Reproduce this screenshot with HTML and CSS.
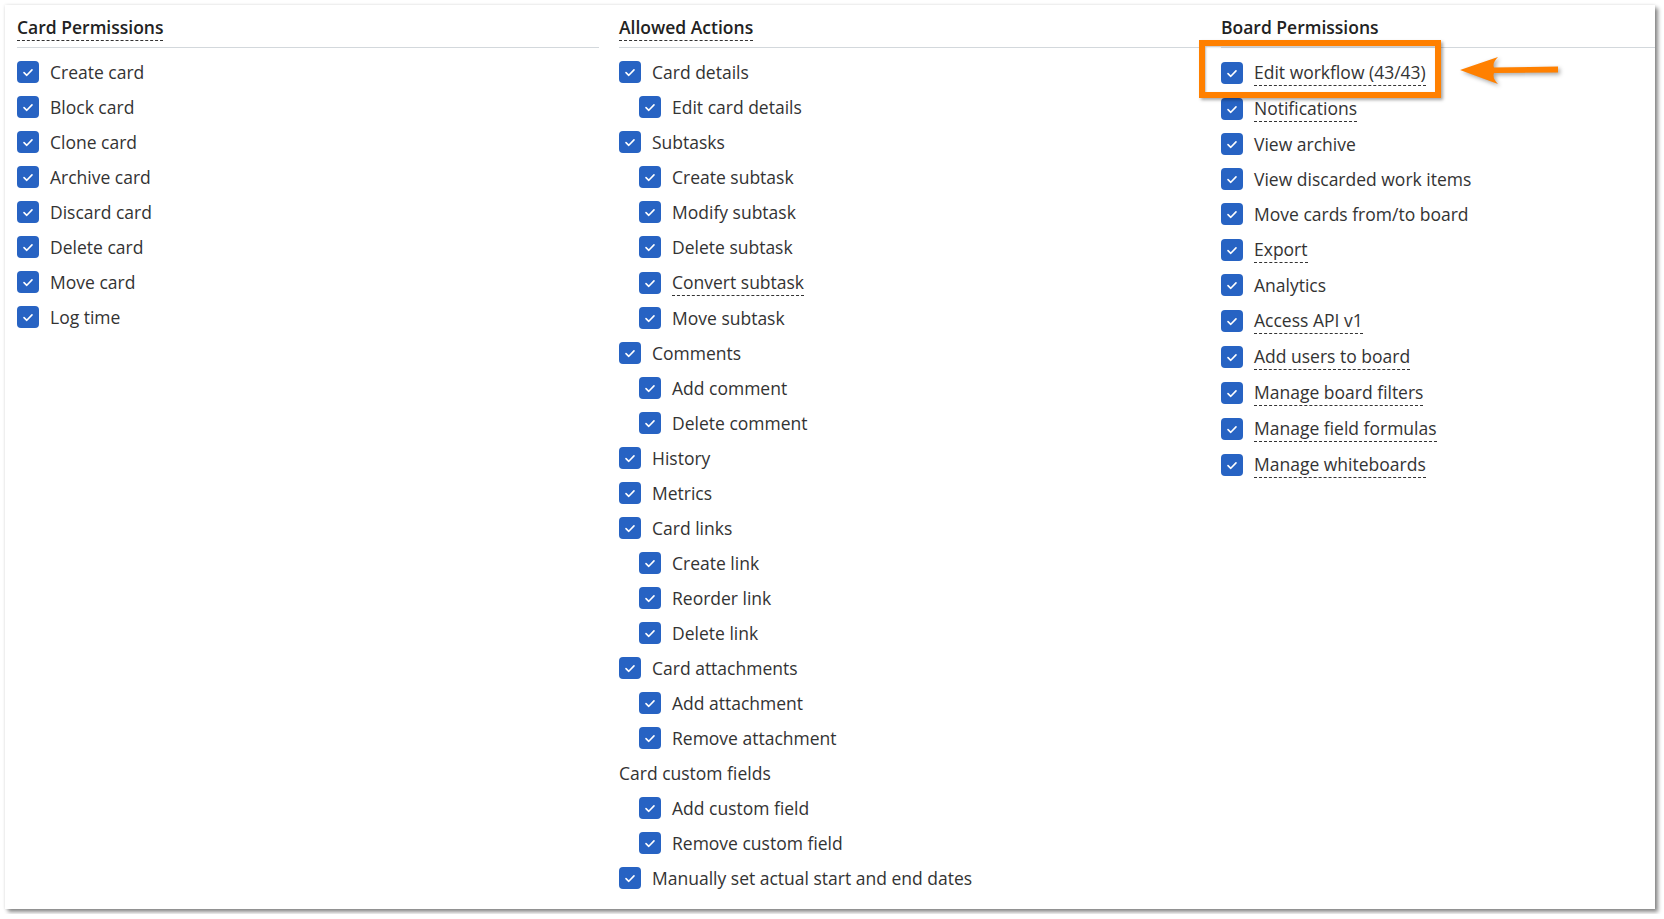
FILE: index.html
```html
<!DOCTYPE html>
<html lang="en">
<head>
    <meta charset="UTF-8">
    <title>Permissions</title>
    <link rel="stylesheet" href="styles.css">
</head>
<body>
    <div class="frame">
        <div class="columns">
            <!-- Card permissions -->
            <section class="column">
                <h2 class="col-head"><span class="tip">Card Permissions</span></h2>
                <ul class="perm-list">
                    <li class="row"><span class="box"></span>Create card</li>
                    <li class="row"><span class="box"></span>Block card</li>
                    <li class="row"><span class="box"></span>Clone card</li>
                    <li class="row"><span class="box"></span>Archive card</li>
                    <li class="row"><span class="box"></span>Discard card</li>
                    <li class="row"><span class="box"></span>Delete card</li>
                    <li class="row"><span class="box"></span>Move card</li>
                    <li class="row"><span class="box"></span>Log time</li>
                </ul>
            </section>

            <!-- Allowed actions -->
            <section class="column">
                <h2 class="col-head"><span class="tip">Allowed Actions</span></h2>
                <ul class="perm-list">
                    <li class="row"><span class="box"></span>Card details</li>
                    <li class="row sub"><span class="box"></span>Edit card details</li>
                    <li class="row"><span class="box"></span>Subtasks</li>
                    <li class="row sub"><span class="box"></span>Create subtask</li>
                    <li class="row sub"><span class="box"></span>Modify subtask</li>
                    <li class="row sub"><span class="box"></span>Delete subtask</li>
                    <li class="row sub tall"><span class="box"></span><span class="tip">Convert subtask</span></li>
                    <li class="row sub"><span class="box"></span>Move subtask</li>
                    <li class="row"><span class="box"></span>Comments</li>
                    <li class="row sub"><span class="box"></span>Add comment</li>
                    <li class="row sub"><span class="box"></span>Delete comment</li>
                    <li class="row"><span class="box"></span>History</li>
                    <li class="row"><span class="box"></span>Metrics</li>
                    <li class="row"><span class="box"></span>Card links</li>
                    <li class="row sub"><span class="box"></span>Create link</li>
                    <li class="row sub"><span class="box"></span>Reorder link</li>
                    <li class="row sub"><span class="box"></span>Delete link</li>
                    <li class="row"><span class="box"></span>Card attachments</li>
                    <li class="row sub"><span class="box"></span>Add attachment</li>
                    <li class="row sub"><span class="box"></span>Remove attachment</li>
                    <li class="row group">Card custom fields</li>
                    <li class="row sub"><span class="box"></span>Add custom field</li>
                    <li class="row sub"><span class="box"></span>Remove custom field</li>
                    <li class="row"><span class="box"></span>Manually set actual start and end dates</li>
                </ul>
            </section>

            <!-- Board permissions -->
            <section class="column">
                <h2 class="col-head"><span class="tip">Board Permissions</span></h2>
                <ul class="perm-list">
                    <li class="row tall"><span class="box"></span><span class="tip">Edit workflow (43/43)</span></li>
                    <li class="row tall"><span class="box"></span><span class="tip">Notifications</span></li>
                    <li class="row"><span class="box"></span>View archive</li>
                    <li class="row"><span class="box"></span>View discarded work items</li>
                    <li class="row"><span class="box"></span>Move cards from/to board</li>
                    <li class="row tall"><span class="box"></span><span class="tip">Export</span></li>
                    <li class="row"><span class="box"></span>Analytics</li>
                    <li class="row tall"><span class="box"></span><span class="tip">Access API v1</span></li>
                    <li class="row tall"><span class="box"></span><span class="tip">Add users to board</span></li>
                    <li class="row tall"><span class="box"></span><span class="tip">Manage board filters</span></li>
                    <li class="row tall"><span class="box"></span><span class="tip">Manage field formulas</span></li>
                    <li class="row tall"><span class="box"></span><span class="tip">Manage whiteboards</span></li>
                </ul>
            </section>
        </div>

        <!-- Screenshot annotation -->
        <div class="callout"></div>
        <svg class="arrow" width="110" height="36" viewBox="1455 54 110 36">
            <path d="M1460 70 L1498 57 Q1492 63 1494 67.5 L1558 66.5 L1558 72.5 L1494 73 Q1492 78 1498 84 Z" fill="#ff8000"/>
        </svg>
    </div>
</body>
</html>
```

FILE: styles.css
```css
/* Page and screenshot frame */
body {
    margin: 0;
    background: #fff;
    font-family: "Open Sans", "Noto Sans", Arial, sans-serif;
    color: #333;
}

.frame {
    position: relative;
    margin: 5px;
    width: 1650px;
    height: 904px;
    background: #fff;
    overflow: hidden;
    box-shadow: 3px 3px 4px rgba(0, 0, 0, 0.45), 0 0 3px rgba(0, 0, 0, 0.12);
}

/* Three permission columns */
.columns {
    display: flex;
    gap: 20px;
    padding: 12px 0 0 12px;
}

.column {
    flex: 0 0 582px;
}

.col-head {
    margin: 0;
    padding-bottom: 10px;
    border-bottom: 1px solid #d3d8dc;
    font-size: 17.5px;
    font-weight: 600;
    line-height: 20px;
    color: #222;
}

.tip {
    border-bottom: 1px dashed #333;
    padding-bottom: 1px;
}

.perm-list {
    list-style: none;
    margin: 0;
    padding: 6px 0 0 0;
}

.row {
    display: flex;
    align-items: center;
    gap: 11px;
    height: 35px;
    font-size: 17.5px;
    white-space: nowrap;
}

.row.tall {
    box-sizing: border-box;
    height: 36px;
    padding-top: 1px;
}

.row.sub {
    padding-left: 20px;
}

/* Checked checkbox */
.box {
    flex: 0 0 22px;
    width: 22px;
    height: 22px;
    border-radius: 4px;
    background: #2763c3 url("data:image/svg+xml,%3Csvg xmlns='http://www.w3.org/2000/svg' viewBox='0 0 22 22'%3E%3Cpath d='M7 11.6 L9.8 14.3 L15 8.9' fill='none' stroke='white' stroke-width='1.6' stroke-linecap='round' stroke-linejoin='round'/%3E%3C/svg%3E") no-repeat center / 22px 22px;
}

/* Orange highlight box and arrow */
.callout {
    position: absolute;
    left: 1194px;
    top: 35px;
    width: 230px;
    height: 46px;
    border: 6px solid #ff8000;
    box-shadow: 2px 2px 3px rgba(0, 0, 0, 0.35), inset 1px 1px 2px rgba(0, 0, 0, 0.25);
}

.arrow {
    position: absolute;
    left: 1450px;
    top: 49px;
    filter: drop-shadow(2px 2px 2px rgba(0, 0, 0, 0.35));
}
```
